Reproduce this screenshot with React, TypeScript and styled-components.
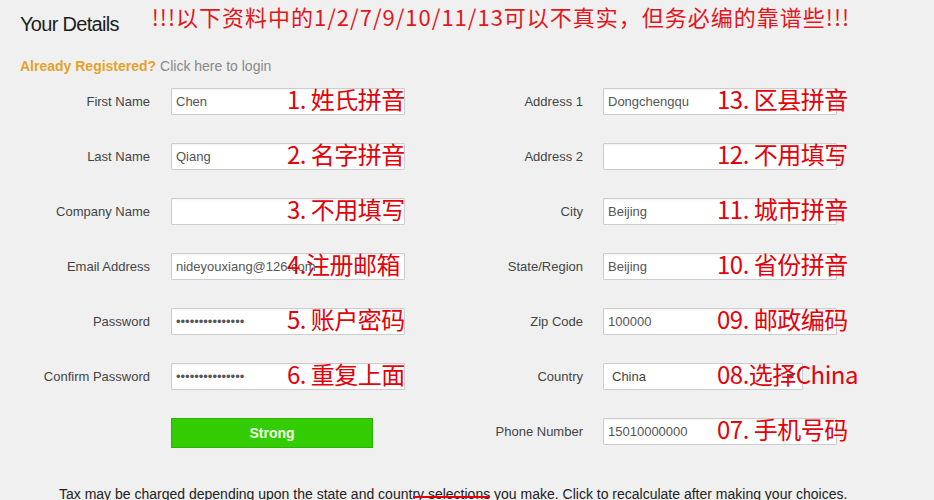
import React from "react";
import styled, { createGlobalStyle } from "styled-components";

const GlobalStyle = createGlobalStyle`
  html, body {
    margin: 0;
    padding: 0;
    background: #f0f0f0;
  }
  body {
    font-family: "Liberation Sans", Arial, sans-serif;
    color: #444;
  }
`;

const Page = styled.div`
  position: relative;
  height: 500px;
  overflow: hidden;
  padding: 0 20px;
  background: #f0f0f0;
`;

const Header = styled.div`
  display: flex;
  align-items: flex-start;
  gap: 33px;
  height: 50px;
`;

const Title = styled.h2`
  margin: 12px 0 0;
  font-family: "Liberation Sans", Arial, sans-serif;
  font-weight: normal;
  font-size: 20px;
  line-height: 24px;
  letter-spacing: -0.7px;
  color: #1c1c1c;
`;

const Notice = styled.div`
  margin-top: 4px;
  font-family: "Noto Sans CJK SC", "Noto Sans", sans-serif;
  font-size: 22px;
  line-height: 24px;
  letter-spacing: 1px;
  color: #e3161c;
  white-space: nowrap;
`;

const LoginLine = styled.div`
  margin-top: 8px;
  font-size: 14px;
  line-height: 16px;
  color: #888;
`;

const Registered = styled.span`
  font-weight: bold;
  color: #e3a22c;
`;

const Form = styled.div`
  display: flex;
  gap: 45px;
  margin-top: 14px;
`;

const Column = styled.div`
  display: flex;
  flex-direction: column;
  gap: 28px;
`;

const Row = styled.div<{ $labelWidth: number; $gap: number }>`
  display: grid;
  grid-template-columns: ${(p) => p.$labelWidth}px 234px;
  column-gap: ${(p) => p.$gap}px;
  align-items: center;
  min-height: 27px;
`;

const Label = styled.label`
  text-align: right;
  font-size: 13px;
  color: #444;
  white-space: nowrap;
`;

const Field = styled.div`
  position: relative;
  height: 27px;
`;

const TextInput = styled.input`
  box-sizing: border-box;
  width: 234px;
  height: 27px;
  margin: 0;
  padding: 0 4px;
  border: 1px solid #cdcdcd;
  border-radius: 1px;
  background: #fff;
  box-shadow: inset 0 1px 2px rgba(0, 0, 0, 0.05);
  font-family: "Liberation Sans", Arial, sans-serif;
  font-size: 13px;
  color: #555;
  outline: none;
`;

const SelectBox = styled.div`
  box-sizing: border-box;
  width: 200px;
  height: 27px;
  display: flex;
  align-items: center;
  justify-content: space-between;
  padding: 0 7px 0 8px;
  border: 1px solid #cdcdcd;
  border-radius: 1px;
  background: #fff;
  font-size: 13px;
  color: #444;
`;

const Annotation = styled.span<{ $left: number }>`
  position: absolute;
  left: ${(p) => p.$left}px;
  top: -1px;
  font-family: "Noto Sans CJK SC", "Noto Sans", sans-serif;
  font-size: 24px;
  line-height: 24px;
  letter-spacing: -0.5px;
  color: #e5000a;
  white-space: nowrap;
  pointer-events: none;
`;

const StrongBar = styled.div`
  box-sizing: border-box;
  width: 202px;
  height: 30px;
  display: flex;
  align-items: center;
  justify-content: center;
  background: #33cc00;
  border: 1px solid #2cb300;
  font-size: 14px;
  font-weight: bold;
  color: #f2ffe6;
`;

const Note = styled.p`
  margin: 38px 0 0;
  padding-left: 39px;
  text-align: left;
  font-size: 14px;
  line-height: 16px;
  color: #222;
  white-space: nowrap;
`;

const Struck = styled.span`
  position: relative;
  &::after {
    content: "";
    position: absolute;
    left: 1px;
    right: 0;
    top: 10px;
    height: 2px;
    background: #e5000a;
  }
`;

type Item = {
  label: string;
  value?: string;
  type?: string;
  note: string;
  select?: boolean;
};

const leftItems: Item[] = [
  { label: "First Name", value: "Chen", note: "1. 姓氏拼音" },
  { label: "Last Name", value: "Qiang", note: "2. 名字拼音" },
  { label: "Company Name", value: "", note: "3. 不用填写" },
  { label: "Email Address", value: "nideyouxiang@126.com", note: "4.注册邮箱" },
  { label: "Password", value: "passwordpasswor", type: "password", note: "5. 账户密码" },
  { label: "Confirm Password", value: "passwordpasswor", type: "password", note: "6. 重复上面" },
];

const rightItems: Item[] = [
  { label: "Address 1", value: "Dongchengqu", note: "13. 区县拼音" },
  { label: "Address 2", value: "", note: "12. 不用填写" },
  { label: "City", value: "Beijing", note: "11. 城市拼音" },
  { label: "State/Region", value: "Beijing", note: "10. 省份拼音" },
  { label: "Zip Code", value: "100000", note: "09. 邮政编码" },
  { label: "Country", value: "China", note: "08.选择China", select: true },
  { label: "Phone Number", value: "15010000000", note: "07. 手机号码" },
];

const Arrow = () => (
  <svg width="8" height="5" viewBox="0 0 8 5" aria-hidden="true">
    <path d="M0 0 L8 0 L4 5 Z" fill="#555" />
  </svg>
);

function FormRow({ item, labelWidth, gap, noteLeft }: { item: Item; labelWidth: number; gap: number; noteLeft: number }) {
  return (
    <Row $labelWidth={labelWidth} $gap={gap}>
      <Label>{item.label}</Label>
      <Field>
        {item.select ? (
          <SelectBox>
            <span>{item.value}</span>
            <Arrow />
          </SelectBox>
        ) : (
          <TextInput type={item.type ?? "text"} defaultValue={item.value} readOnly />
        )}
        <Annotation $left={noteLeft}>{item.note}</Annotation>
      </Field>
    </Row>
  );
}

export default function App() {
  return (
    <>
      <GlobalStyle />
      <Page>
        <Header>
          <Title>Your Details</Title>
          <Notice>!!!以下资料中的1/2/7/9/10/11/13可以不真实，但务必编的靠谱些!!!</Notice>
        </Header>
        <LoginLine>
          <Registered>Already Registered?</Registered> Click here to login
        </LoginLine>
        <Form>
          <Column>
            {leftItems.map((it) => (
              <FormRow key={it.label} item={it} labelWidth={130} gap={21} noteLeft={116} />
            ))}
            <Row $labelWidth={130} $gap={21}>
              <span />
              <StrongBar>Strong</StrongBar>
            </Row>
          </Column>
          <Column>
            {rightItems.map((it) => (
              <FormRow key={it.label} item={it} labelWidth={133} gap={20} noteLeft={114} />
            ))}
          </Column>
        </Form>
        <Note>
          Tax may be charged depending upon the state and count<Struck>ry selections</Struck> you make. Click to recalculate after making your choices.
        </Note>
      </Page>
    </>
  );
}
